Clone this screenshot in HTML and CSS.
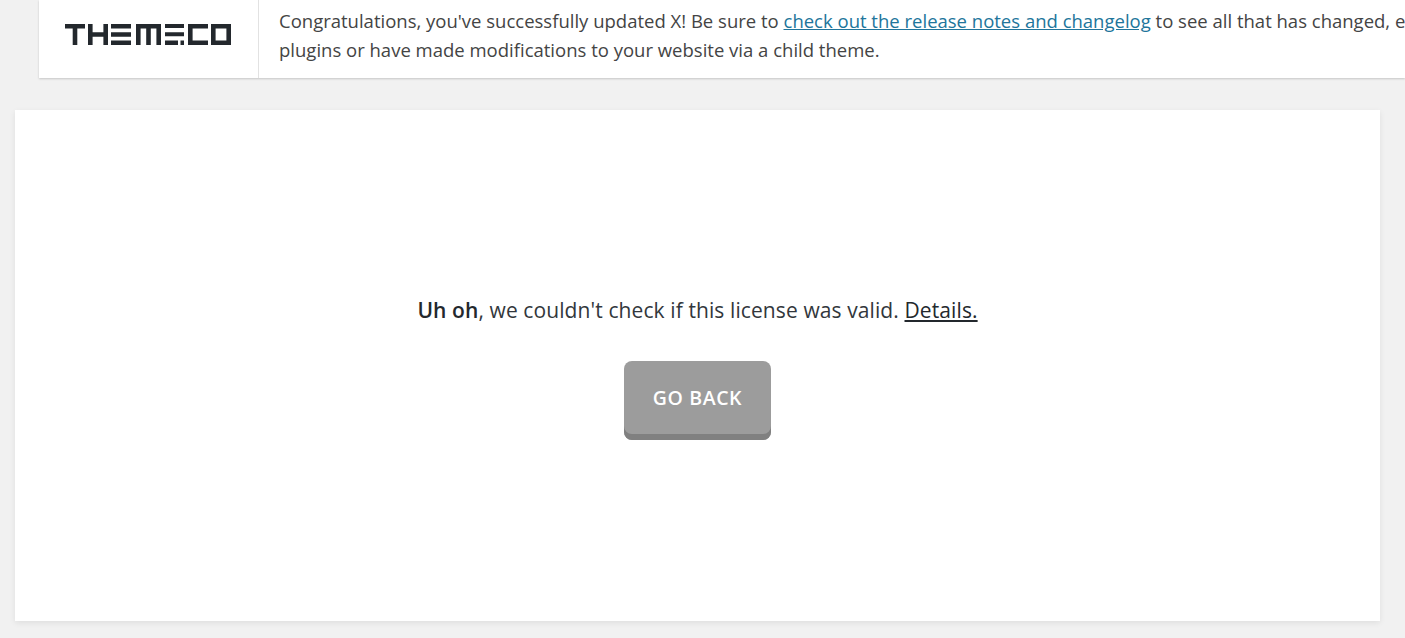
FILE: index.html
```html
<!DOCTYPE html>
<html lang="en">
<head>
<meta charset="utf-8">
<title>License check</title>
<link rel="stylesheet" href="styles.css">
</head>
<body>
<div class="notice">
  <div class="notice-logo">
    <svg class="logo" width="167" height="21" viewBox="0 0 167 21" fill="#23282d" role="img" aria-label="Themeco">
      <path d="M0 0H20V4.500H12.300V21H7.700V4.500H0Z"/>
      <path d="M23 0H27.600V8.200H38.400V0H43V21H38.400V12.700H27.600V21H23Z"/>
      <path d="M46 0H66V4.500H46ZM46 8.200H66V12.700H46ZM46 16.500H66V21H46Z"/>
      <path d="M71 0H96V21H91.400V4.500H85.800V21H81.200V4.500H75.600V21H71Z"/>
      <path d="M100 0H119V4H100ZM100 8.200H119V12.200H100ZM100 16.500H113V21H100ZM115.500 16.500H119V21H115.500Z"/>
      <path d="M123 0H143V4.500H127.600V16.500H143V21H123Z"/>
      <path d="M146 0H166V21H146ZM150.600 4.500V16.500H161.400V4.500Z" fill-rule="evenodd"/>
    </svg>
  </div>
  <div class="notice-text">
    <p>Congratulations, you've successfully updated X! Be sure to <a href="#">check out the release notes and changelog</a> to see all that has changed, especially if you are using any additional plugins or have made modifications to your website via a child theme.</p>
  </div>
</div>
<main class="card">
  <p class="message"><strong>Uh oh</strong>, we couldn't check if this license was valid. <a href="#">Details.</a></p>
  <a class="button" href="#">GO BACK</a>
</main>
</body>
</html>
```
FILE: styles.css
```css
* { box-sizing: border-box; }
html, body { margin: 0; height: 100%; overflow: hidden; }
body {
  background: #f1f1f1;
  font-family: "Open Sans", "Noto Sans", sans-serif;
  color: #444;
  display: flex;
  flex-direction: column;
  width: 1405px;
}
.notice {
  margin-left: 39px;
  height: 78px;
  flex: none;
  display: flex;
  background: #fff;
  box-shadow: 0 1px 2px rgba(0, 0, 0, 0.18);
  overflow: hidden;
}
.notice-logo {
  width: 220px;
  flex: none;
  border-right: 1px solid #e2e2e2;
  padding: 24px 0 0 26px;
}
.logo { display: block; }
.notice-text {
  padding: 6px 0 0 20px;
  flex: none;
  font-size: 18.500px;
  line-height: 29px;
}
.notice-text p { margin: 0; width: 1490px; }
.notice-text a { color: #21759b; }
.card {
  margin: 32px 0 0 15px;
  width: 1365px;
  height: 511px;
  background: #fff;
  box-shadow: 0 2px 6px rgba(0, 0, 0, 0.08);
  display: flex;
  flex-direction: column;
  align-items: center;
  padding-top: 184px;
}
.message {
  margin: 0;
  font-size: 21px;
  letter-spacing: 0.1px;
  line-height: 32px;
  color: #32373c;
}
.message strong { font-weight: 600; color: #23282d; }
.message a { color: #23282d; }
.button {
  margin-top: 35px;
  width: 147px;
  height: 79px;
  border-radius: 8px;
  background: #9c9c9c;
  box-shadow: inset 0 -6px 0 #808080;
  color: #fff;
  font-size: 19.500px;
  font-weight: 600;
  letter-spacing: 0.6px;
  text-decoration: none;
  display: flex;
  align-items: center;
  justify-content: center;
  padding-bottom: 7px;
}
```
